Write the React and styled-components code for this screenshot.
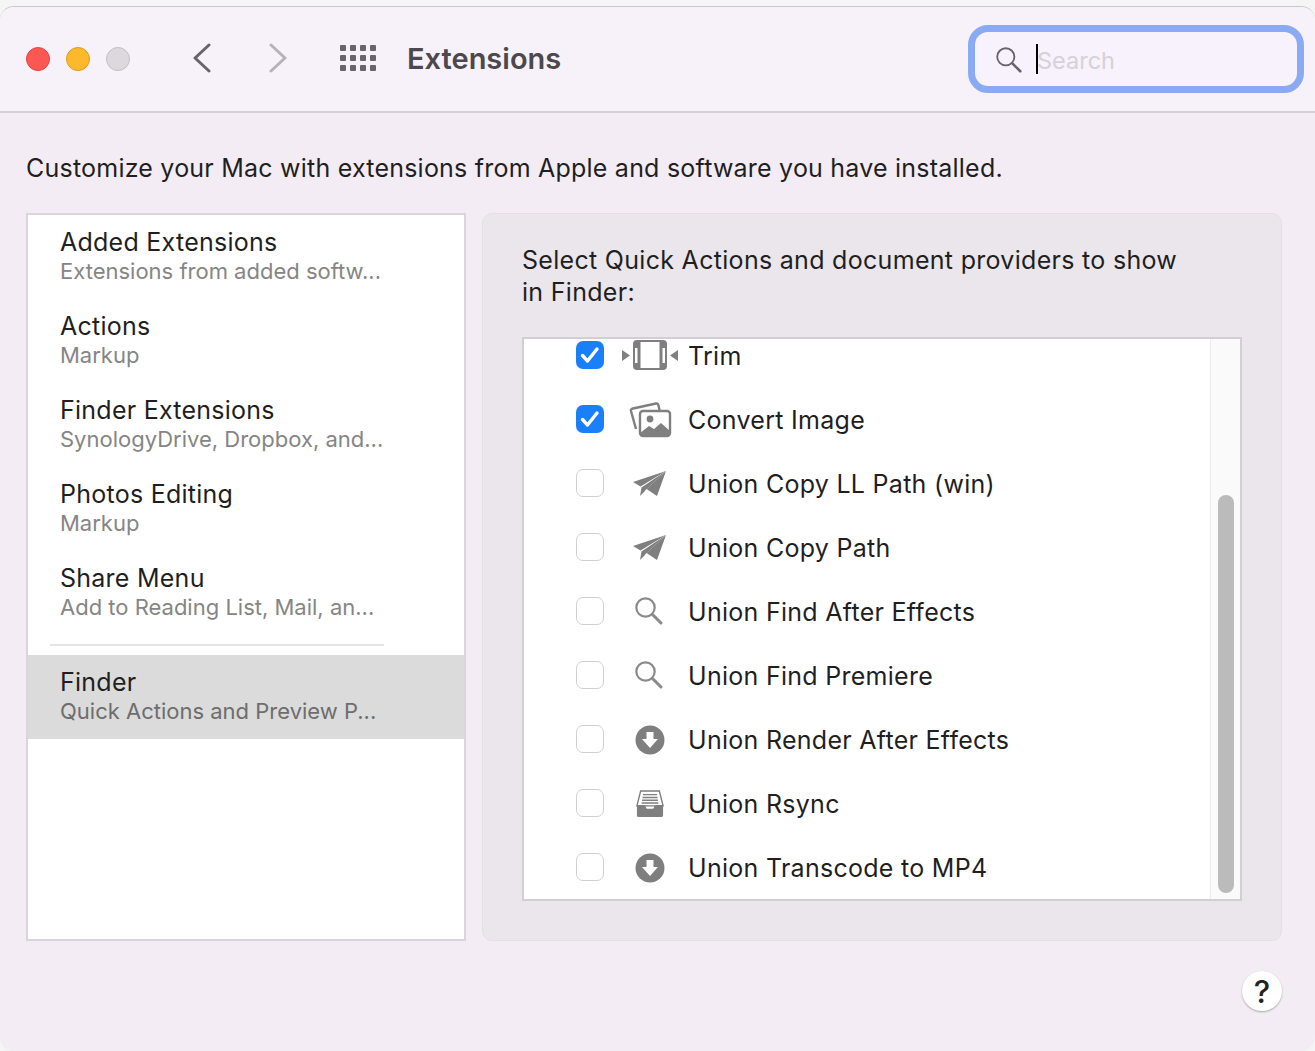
import React from 'react';
import styled, { createGlobalStyle } from 'styled-components';

const GlobalStyle = createGlobalStyle`
    html, body {
        margin: 0;
        padding: 0;
        background: #f5f5f5;
        font-family: Inter, "Liberation Sans", sans-serif;
    }
`;

const sidebarItems = [
    { title: 'Added Extensions', sub: 'Extensions from added softw...' },
    { title: 'Actions', sub: 'Markup' },
    { title: 'Finder Extensions', sub: 'SynologyDrive, Dropbox, and...' },
    { title: 'Photos Editing', sub: 'Markup' },
    { title: 'Share Menu', sub: 'Add to Reading List, Mail, an...' },
];

const TrimIcon = () => (
    <svg width="58" height="32" viewBox="0 1 58 32">
        <path d="M1 11 L9 16.5 L1 22 Z" fill="#7f7f7f" />
        <path d="M57 11 L49 16.5 L57 22 Z" fill="#7f7f7f" />
        <rect x="12" y="1" width="34" height="30" rx="4" fill="#7f7f7f" />
        <rect x="19.5" y="3" width="19" height="26" fill="#fff" />
        <rect x="14" y="9" width="2.5" height="15" fill="#fff" />
        <rect x="41.5" y="9" width="2.5" height="15" fill="#fff" />
    </svg>
);

const ImageIcon = () => (
    <svg width="44" height="36" viewBox="0 0 44 36">
        <path d="M8 27 L3 9 Q2.5 7 5 6.5 L28 1.5 Q30 1.2 30.5 3.5 L31.5 8" fill="none" stroke="#7f7f7f" strokeWidth="2.4" />
        <rect x="12" y="9" width="30" height="25" rx="3" fill="#fff" stroke="#7f7f7f" strokeWidth="2.4" />
        <circle cx="22" cy="17" r="3.4" fill="#7f7f7f" />
        <path d="M12 34 V31 L21 24 L26 27 L33 21 L42 29 V34 Z" fill="#7f7f7f" />
    </svg>
);

const PlaneIcon = () => (
    <svg width="34" height="26" viewBox="0 0 34 26">
        <path d="M33 0 L0 11 L7.5 15.5 Z" fill="#7f7f7f" />
        <path d="M33 0 L8.5 16.5 L7 25 L11 21 L12.5 19 Z" fill="#7f7f7f" />
        <path d="M33 0 L13.5 18 L24 25 Z" fill="#7f7f7f" />
    </svg>
);

const SearchGlass = ({ size = 30, color = '#8a8a8a', width = 2.2 }) => (
    <svg width={size} height={size} viewBox="0 0 30 30">
        <circle cx="10.5" cy="10.5" r="9.2" fill="none" stroke={color} strokeWidth={width} />
        <path d="M17.5 17.5 L26 26" stroke={color} strokeWidth={width + 0.8} strokeLinecap="round" />
    </svg>
);

const DownloadIcon = () => (
    <svg width="30" height="30" viewBox="0 0 30 30">
        <circle cx="15" cy="15" r="14.5" fill="#7f7f7f" />
        <path d="M11.5 7 H18.5 V14 H23 L15 23 L7 14 H11.5 Z" fill="#fff" />
    </svg>
);

const InboxIcon = () => (
    <svg width="28" height="28" viewBox="0 0 30 30">
        <path d="M1 17 L5 1 H25 L29 17 Z" fill="#fff" stroke="#7f7f7f" strokeWidth="1.5" />
        <path d="M7.5 5 H22.5 M7 8 H23 M6.5 11 H23.5 M6 14 H24" stroke="#7f7f7f" strokeWidth="1.5" />
        <path d="M1 16 H9.5 L11.5 20 H18.5 L20.5 16 H29 V27 Q29 29 27 29 H3 Q1 29 1 27 Z" fill="#7f7f7f" />
    </svg>
);

const actions = [
    { label: 'Trim', checked: true, icon: <TrimIcon /> },
    { label: 'Convert Image', checked: true, icon: <ImageIcon /> },
    { label: 'Union Copy LL Path (win)', icon: <PlaneIcon /> },
    { label: 'Union Copy Path', icon: <PlaneIcon /> },
    { label: 'Union Find After Effects', icon: <SearchGlass /> },
    { label: 'Union Find Premiere', icon: <SearchGlass /> },
    { label: 'Union Render After Effects', icon: <DownloadIcon /> },
    { label: 'Union Rsync', icon: <InboxIcon /> },
    { label: 'Union Transcode to MP4', icon: <DownloadIcon /> },
];

const App = () => {
    return (
        <React.Fragment>
            <GlobalStyle />
            <Window>
                <Toolbar>
                    <Lights>
                        <Light color="#fb5753" edge="#e2453f" />
                        <Light color="#fdb82c" edge="#dd9b1e" />
                        <Light color="#dcd8de" edge="#c2bec5" />
                    </Lights>
                    <NavButtons>
                        <svg width="20" height="30" viewBox="0 0 20 30">
                            <path d="M17 2 L3 15 L17 28" fill="none" stroke="#69646b" strokeWidth="3" strokeLinecap="round" strokeLinejoin="round" />
                        </svg>
                        <svg width="20" height="30" viewBox="0 0 20 30">
                            <path d="M3 2 L17 15 L3 28" fill="none" stroke="#b6b2b9" strokeWidth="3" strokeLinecap="round" strokeLinejoin="round" />
                        </svg>
                    </NavButtons>
                    <GridDots>
                        {Array.from({ length: 12 }).map((_, i) => <i key={i} />)}
                    </GridDots>
                    <Title>Extensions</Title>
                    <SearchBox>
                        <SearchIconSlot>
                            <SearchGlass size={28} color="#69646b" width={2} />
                        </SearchIconSlot>
                        <Caret />
                        <Placeholder>Search</Placeholder>
                    </SearchBox>
                </Toolbar>
                <Content>
                    <Intro>Customize your Mac with extensions from Apple and software you have installed.</Intro>
                    <Panels>
                        <Sidebar>
                            {sidebarItems.map(item => (
                                <SideItem key={item.title}>
                                    <SideTitle>{item.title}</SideTitle>
                                    <SideSub>{item.sub}</SideSub>
                                </SideItem>
                            ))}
                            <SideDivider />
                            <SideItem selected>
                                <SideTitle>Finder</SideTitle>
                                <SideSub selected>Quick Actions and Preview P...</SideSub>
                            </SideItem>
                        </Sidebar>
                        <Detail>
                            <DetailText>Select Quick Actions and document providers to show in Finder:</DetailText>
                            <ActionList>
                                <Rows>
                                    {actions.map(action => (
                                        <Row key={action.label}>
                                            <CheckBox checked={action.checked}>
                                                {action.checked && (
                                                    <svg width="20" height="18" viewBox="0 0 20 18">
                                                        <path d="M2.5 9.5 L7.5 15 L17 3" fill="none" stroke="#fff" strokeWidth="3.4" strokeLinecap="round" strokeLinejoin="round" />
                                                    </svg>
                                                )}
                                            </CheckBox>
                                            <IconSlot>{action.icon}</IconSlot>
                                            <RowLabel>{action.label}</RowLabel>
                                        </Row>
                                    ))}
                                </Rows>
                                <ScrollTrack>
                                    <ScrollThumb />
                                </ScrollTrack>
                            </ActionList>
                        </Detail>
                    </Panels>
                    <Footer>
                        <HelpButton>?</HelpButton>
                    </Footer>
                </Content>
            </Window>
        </React.Fragment>
    );
};
export default App;

const Window = styled.div`
    box-sizing: border-box;
    margin-top: 6px;
    height: 1045px;
    background: #f3ecf4;
    border-top: 1px solid #c9c7ca;
    border-radius: 14px;
    overflow: hidden;
`;

const Toolbar = styled.div`
    box-sizing: border-box;
    height: 106px;
    display: flex;
    align-items: center;
    padding: 0 11px 2px 26px;
    background: #f7f2f9;
    border-bottom: 2px solid #d4d0d6;
`;

const Lights = styled.div`
    display: flex;
    gap: 16px;
    margin-top: 2px;
`;

const Light = styled.div`
    box-sizing: border-box;
    width: 24px;
    height: 24px;
    border-radius: 50%;
    background: ${props => props.color};
    border: 1px solid ${props => props.edge};
`;

const NavButtons = styled.div`
    display: flex;
    gap: 56px;
    margin-left: 62px;
    svg {
        display: block;
    }
`;

const GridDots = styled.div`
    display: grid;
    grid-template-columns: repeat(4, 6px);
    grid-auto-rows: 6px;
    gap: 4px;
    margin-left: 52px;
    i {
        background: #69646b;
        border-radius: 1px;
    }
`;

const Title = styled.div`
    margin-left: 31px;
    font-size: 29px;
    font-weight: 600;
    color: #4c484e;
`;

const SearchBox = styled.div`
    box-sizing: border-box;
    width: 336px;
    height: 68px;
    margin: 2px 0 0 auto;
    display: flex;
    align-items: center;
    padding: 0 0 0 21px;
    border: 7px solid #8aabf3;
    border-radius: 20px;
    background: #f7f2fb;
`;

const SearchIconSlot = styled.div`
    display: flex;
    margin-top: 3px;
`;

const Caret = styled.div`
    width: 2px;
    height: 30px;
    margin-left: 12px;
    background: #000;
`;

const Placeholder = styled.div`
    margin: 2px 0 0 -1px;
    font-size: 23.5px;
    color: #d6d1d8;
`;

const Content = styled.div`
    padding: 0 33px 0 26px;
`;

const Intro = styled.div`
    height: 100px;
    line-height: 110px;
    font-size: 25px;
    letter-spacing: 0.22px;
    color: #1f1f1f;
    white-space: nowrap;
`;

const Panels = styled.div`
    display: flex;
    gap: 16px;
    height: 728px;
`;

const Sidebar = styled.div`
    box-sizing: border-box;
    width: 440px;
    border: 2px solid #dad5dc;
    background: #fff;
`;

const SideItem = styled.div`
    box-sizing: border-box;
    height: 84px;
    padding: 11px 0 0 32px;
    background: ${props => (props.selected ? '#dbdbdb' : 'transparent')};
`;

const SideTitle = styled.div`
    font-size: 25px;
    line-height: 32px;
    letter-spacing: 0.25px;
    color: #1f1f1f;
`;

const SideSub = styled.div`
    font-size: 22px;
    line-height: 27px;
    color: ${props => (props.selected ? '#6d6d6d' : '#858585')};
`;

const SideDivider = styled.div`
    height: 2px;
    margin: 9px 80px 9px 22px;
    background: #e5e5e5;
`;

const Detail = styled.div`
    box-sizing: border-box;
    flex: 1;
    padding: 30px 39px 0;
    background: #ebe6ec;
    border: 1px solid #e4dfe6;
    border-radius: 10px;
`;

const DetailText = styled.div`
    width: 680px;
    font-size: 25px;
    line-height: 32px;
    letter-spacing: 0.3px;
    color: #1f1f1f;
`;

const ActionList = styled.div`
    box-sizing: border-box;
    display: flex;
    width: 720px;
    height: 564px;
    margin-top: 29px;
    background: #fff;
    border: 2px solid #d2ced4;
    overflow: hidden;
`;

const Rows = styled.div`
    flex: 1;
    margin-top: -15px;
`;

const Row = styled.div`
    display: flex;
    align-items: center;
    height: 64px;
    padding-left: 52px;
`;

const CheckBox = styled.div`
    box-sizing: border-box;
    width: 28px;
    height: 28px;
    margin-top: -2px;
    display: flex;
    align-items: center;
    justify-content: center;
    border-radius: 7px;
    background: ${props => (props.checked ? '#1a7ffb' : '#fff')};
    border: ${props => (props.checked ? 'none' : '1px solid #d0d0d0')};
`;

const IconSlot = styled.div`
    width: 60px;
    margin-left: 16px;
    display: flex;
    align-items: center;
    justify-content: center;
    svg {
        display: block;
    }
`;

const RowLabel = styled.div`
    margin-left: 8px;
    font-size: 25px;
    letter-spacing: 0.28px;
    color: #1f1f1f;
`;

const ScrollTrack = styled.div`
    box-sizing: border-box;
    width: 30px;
    padding: 156px 6px 6px 7px;
    background: #fafafa;
    border-left: 1px solid #ececec;
`;

const ScrollThumb = styled.div`
    height: 398px;
    border-radius: 8px;
    background: #bbbbbb;
`;

const Footer = styled.div`
    display: flex;
    justify-content: flex-end;
    padding-top: 30px;
`;

const HelpButton = styled.div`
    width: 40px;
    height: 40px;
    display: flex;
    align-items: center;
    justify-content: center;
    border-radius: 50%;
    background: #fff;
    box-shadow: 0 1px 2px rgba(0, 0, 0, 0.3);
    font-size: 31px;
    font-weight: 500;
    color: #222;
`;
